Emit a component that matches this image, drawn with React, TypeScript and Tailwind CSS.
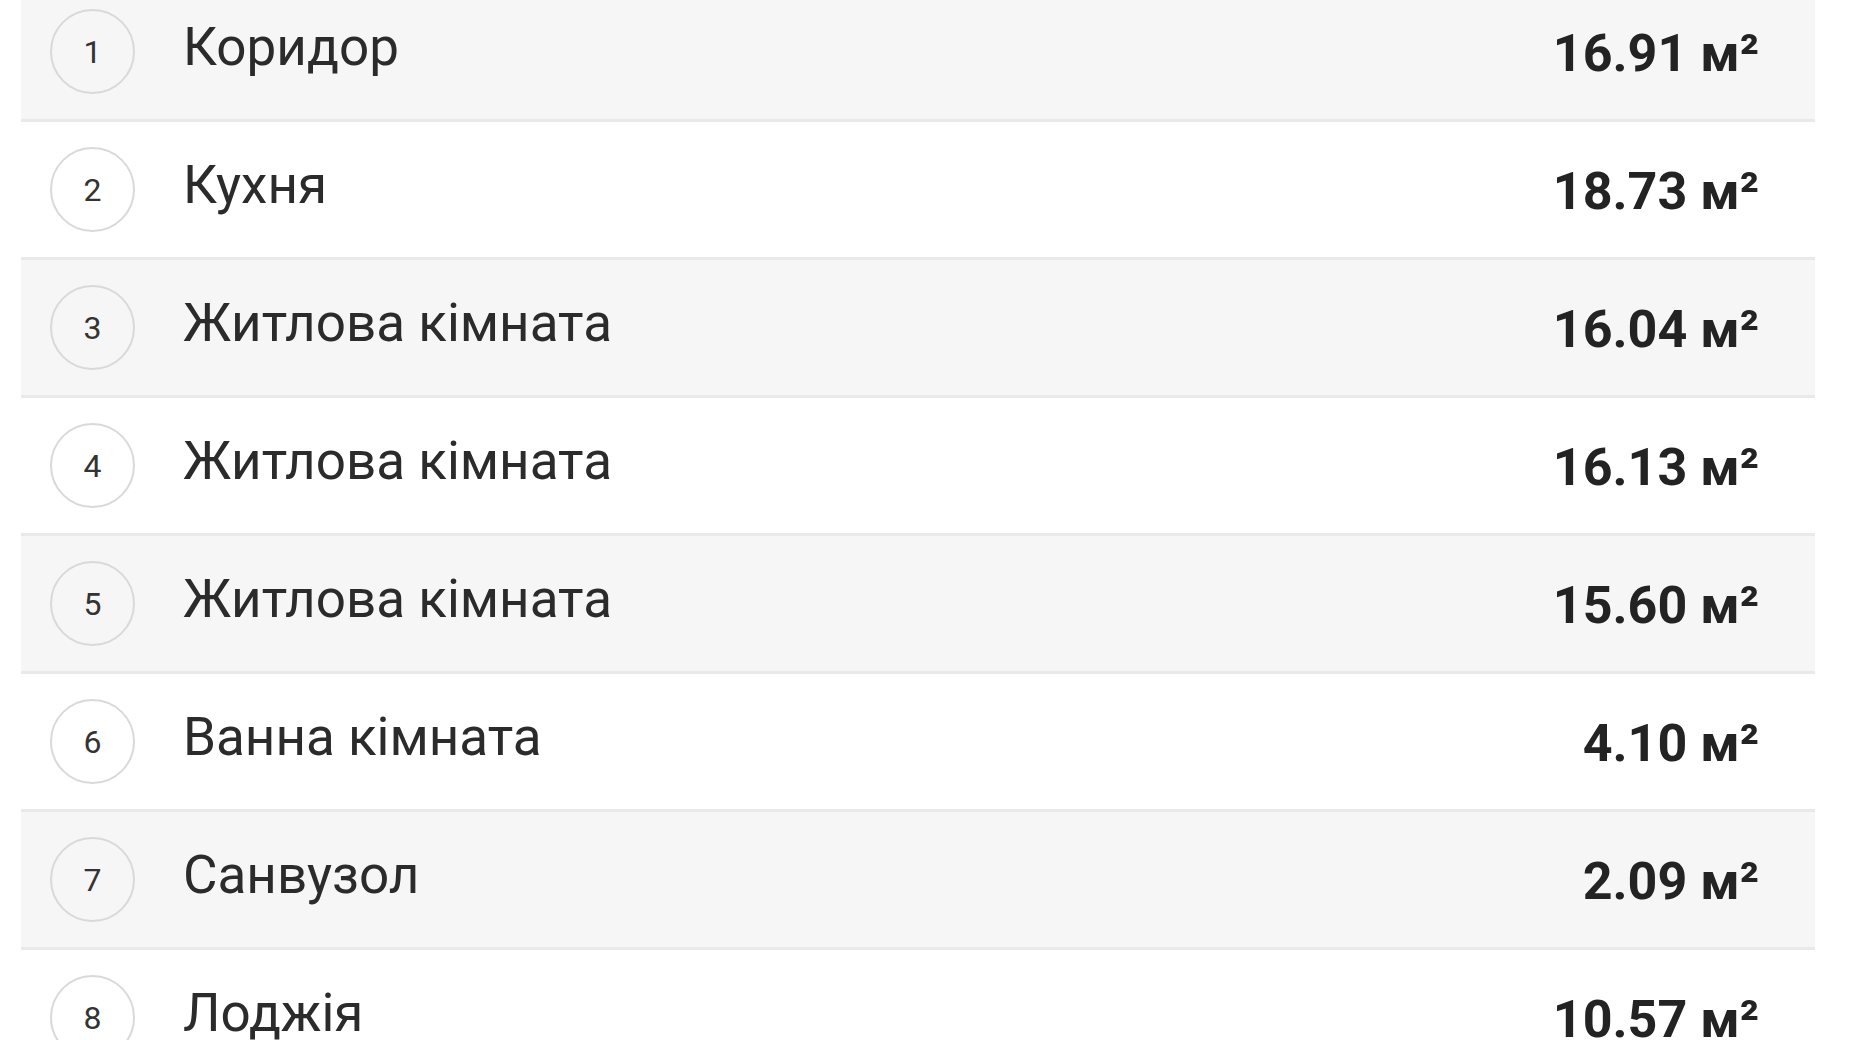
import React from 'react';

const rooms = [
  { n: 1, name: 'Коридор', area: '16.91' },
  { n: 2, name: 'Кухня', area: '18.73' },
  { n: 3, name: 'Житлова кімната', area: '16.04' },
  { n: 4, name: 'Житлова кімната', area: '16.13' },
  { n: 5, name: 'Житлова кімната', area: '15.60' },
  { n: 6, name: 'Ванна кімната', area: '4.10' },
  { n: 7, name: 'Санвузол', area: '2.09' },
  { n: 8, name: 'Лоджія', area: '10.57' },
];

export default function App() {
  return (
    <div className="w-[1850px] h-[1040px] overflow-hidden bg-white font-['Roboto','Liberation_Sans',sans-serif]">
      <div className="-mt-[16px] ml-[21px] w-[1794px]">
        {rooms.map((r) => (
          <div
            key={r.n}
            className={`flex items-center h-[138px] border-b-[3px] border-[#e9e9e9] pl-[29px] pr-[56px] ${
              r.n % 2 === 1 ? 'bg-[#f6f6f6]' : 'bg-white'
            }`}
          >
            <div className="w-[85px] h-[85px] shrink-0 rounded-full border-2 border-[#d9d9d9] flex items-center justify-center text-[32px] text-[#333]">
              {r.n}
            </div>
            <div className="ml-[48px] flex-1 text-[53px] text-[#2b2b2b] leading-none -mt-[9px]">{r.name}</div>
            <div className="text-[52px] font-bold text-[#232323] leading-none mt-[4px]">
              {r.area} м²
            </div>
          </div>
        ))}
      </div>
    </div>
  );
}
